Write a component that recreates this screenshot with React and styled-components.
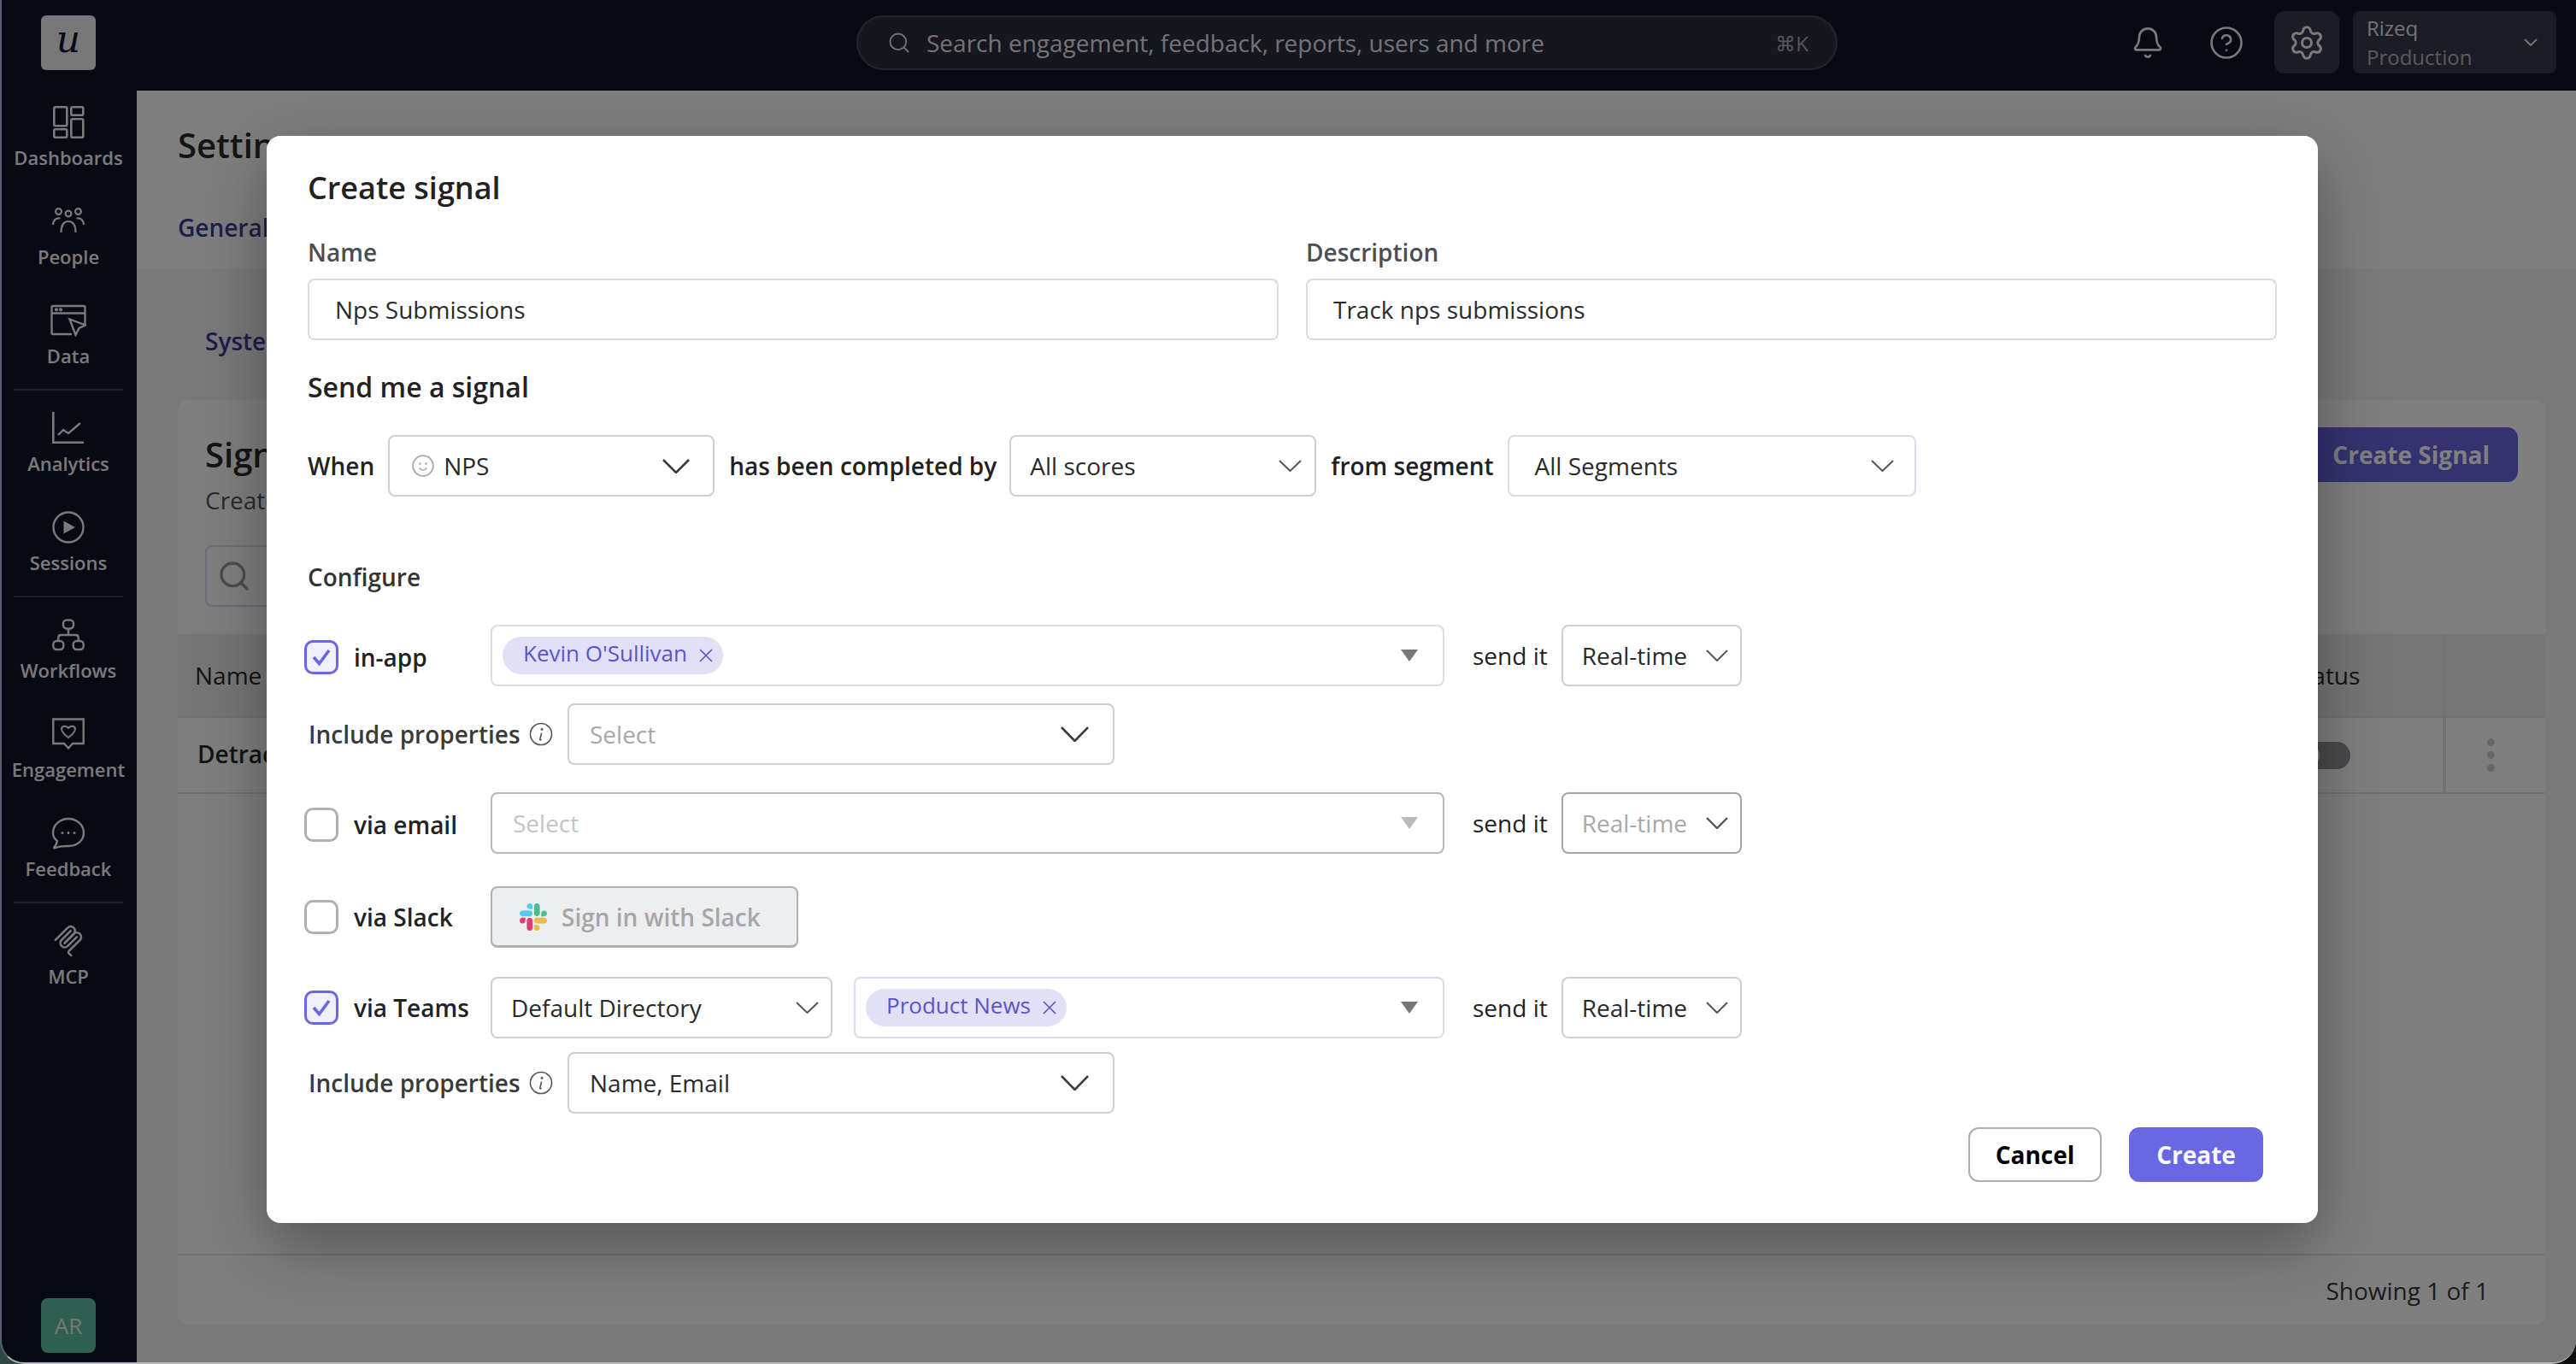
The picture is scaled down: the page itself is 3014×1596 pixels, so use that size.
import React from "react";
import styled, { createGlobalStyle } from "styled-components";
import { Bell, CircleHelp, Settings, Search } from "lucide-react";

const GlobalStyle = createGlobalStyle`
	html, body {
		margin: 0;
		padding: 0;
		overflow: hidden;
		background: linear-gradient(90deg, #2c4a42, #0d0d0d);
	}
	* {
		box-sizing: border-box;
	}
	body {
		font-family: "Open Sans", "Noto Sans", sans-serif;
		font-size: 28px;
		color: #222;
	}
`;

const toneColors = {
	grey: "#cfcfd2",
	blue: "#d8dbea",
	strong: "#b8b8bb",
	focus: "#a4a4ac",
};

const Shell = styled.div`
	position: relative;
	display: flex;
	width: 3014px;
	height: 1596px;
	overflow: hidden;
	background: #0e1228;
	border-left: 2px solid #5c5c72;
	border-bottom: 2px solid #b8b8b8;
	border-radius: 0 0 28px 28px;
`;

const Sidebar = styled.nav`
	flex: 0 0 158px;
	display: flex;
	flex-direction: column;
	align-items: center;
	padding-top: 18px;
	padding-bottom: 11px;
`;

const Logo = styled.div`
	width: 64px;
	height: 64px;
	margin-left: -2px;
	margin-bottom: 22px;
	flex: none;
	display: flex;
	align-items: center;
	justify-content: center;
	background: #f0f0f0;
	border-radius: 6px;
	color: #0e1228;
	font-family: "DejaVu Serif", "Liberation Serif", serif;
	font-style: italic;
	font-weight: 400;
	font-size: 44px;
	line-height: 1;
	padding-bottom: 8px;
`;

const NavItem = styled.a`
	width: 156px;
	margin-left: -2px;
	height: 116px;
	flex: none;
	display: flex;
	flex-direction: column;
	align-items: center;
	padding-top: 20px;
	color: #f4f4f4;
	font-size: 22px;
	font-weight: 600;

	svg {
		display: block;
		height: 38px;
		width: 42px;
		flex: none;
	}
`;

const NavLabel = styled.span`
	margin-top: 5px;
	line-height: 34px;
`;

const NavDivider = styled.div`
	flex: none;
	width: 128px;
	margin-left: -2px;
	height: 2px;
	margin-top: 3px;
	margin-bottom: 5px;
	background: #363848;
`;

const Avatar = styled.div`
	margin-top: auto;
	margin-left: -2px;
	width: 64px;
	height: 64px;
	display: flex;
	align-items: center;
	justify-content: center;
	background: #5ebea0;
	border-radius: 8px;
	color: #eee;
	font-size: 26px;
`;

const Column = styled.div`
	flex: 1;
	min-width: 0;
	display: flex;
	flex-direction: column;
`;

const Topbar = styled.header`
	flex: 0 0 106px;
	display: flex;
	align-items: flex-start;
	padding: 13px 23px 0 842px;
`;

const SearchBar = styled.div`
	width: 1148px;
	height: 64px;
	margin-top: 5px;
	display: flex;
	align-items: center;
	padding: 0 32px 0 34px;
	background: #2a2c3c;
	border: 2px solid #444659;
	border-radius: 32px;
	color: #e6e6ec;
`;

const SearchText = styled.span`
	margin-left: 18px;
	font-size: 28px;
	flex: 1;
`;

const ShortcutHint = styled.span`
	font-size: 24px;
	color: #aaaab0;
`;

const TopActions = styled.div`
	margin-left: auto;
	display: flex;
	align-items: center;
	height: 73px;
	color: #f4f4f4;
`;

const IconSlot = styled.div`
	width: ${props => props.$w}px;
	display: flex;
	justify-content: center;
`;

const GearButton = styled.div`
	width: 76px;
	height: 73px;
	margin-left: 10px;
	display: flex;
	align-items: center;
	justify-content: center;
	background: #36384a;
	border-radius: 12px;
`;

const WorkspaceSwitch = styled.div`
	width: 238px;
	height: 73px;
	margin-left: 16px;
	display: flex;
	align-items: center;
	justify-content: space-between;
	padding: 0 22px 0 16px;
	background: #36384a;
	border-radius: 8px;
`;

const WorkspaceName = styled.div`
	font-size: 24px;
	line-height: 34px;
	color: #e6e6ec;
`;

const WorkspaceEnv = styled(WorkspaceName)`
	color: #b4b4ba;
`;

const Main = styled.main`
	flex: 1;
	background: #f4f4f4;
`;

const PageHead = styled.div`
	height: 208px;
	padding: 38px 48px 0;
	background: #fff;
`;

const PageTitle = styled.h1`
	margin: 0;
	font-size: 40px;
	font-weight: 600;
	line-height: 52px;
	color: #2a2a2a;
`;

const TopTab = styled.div`
	margin-top: 51px;
	font-size: 28px;
	font-weight: 600;
	line-height: 38px;
	color: #3a3e96;
`;

const SubTab = styled(TopTab)`
	margin: 0;
	padding: 66px 0 50px 80px;
	height: 154px;
`;

const Card = styled.section`
	margin: 0 36px 0 48px;
	height: 1082px;
	display: flex;
	flex-direction: column;
	background: #fff;
	border-radius: 12px;
`;

const CardHead = styled.div`
	height: 274px;
	padding: 32px;
	position: relative;
	display: flex;
	justify-content: space-between;
`;

const CardTitle = styled.h2`
	margin: 5px 0 0;
	font-size: 40px;
	font-weight: 600;
	line-height: 54px;
	color: #2a2a2a;
`;

const CardText = styled.p`
	margin: 7px 0 0;
	line-height: 38px;
	color: #555;
`;

const TableSearch = styled.div`
	width: 640px;
	height: 72px;
	margin-top: 34px;
	display: flex;
	align-items: center;
	padding-left: 12px;
	border: 2px solid #d8dbea;
	border-radius: 8px;
	color: #999;
`;

const PrimaryButton = styled.button`
	width: 300px;
	height: 64px;
	border: 0;
	border-radius: 12px;
	background: #6967e1;
	color: #fff;
	font: 700 28px "Open Sans", sans-serif;
	text-align: right;
	padding: 0 33px 0 0;
`;

const TableRow = styled.div`
	display: flex;
	height: ${props => props.$h}px;
	flex: none;
	align-items: stretch;
	background: ${props => (props.$head ? "#ececec" : "#fff")};
	border-bottom: 2px solid #e2e2e2;
`;

const NameCell = styled.div`
	flex: 1;
	display: flex;
	align-items: center;
	padding-left: ${props => props.$pl}px;
	padding-bottom: ${props => props.$pb || 0}px;
	font-weight: ${props => props.$weight};
	color: #282828;
`;

const StatusCell = styled.div`
	width: 186px;
	display: flex;
	align-items: center;
	padding-left: ${props => props.$pl}px;
	font-weight: 500;
	color: #282828;
`;

const ActionCell = styled.div`
	width: 120px;
	display: flex;
	align-items: center;
	justify-content: center;
	border-left: 4px solid ${props => (props.$head ? "#e6e6e6" : "#e2e2e2")};
`;

const Toggle = styled.div`
	width: 66px;
	height: 32px;
	padding: 2px;
	border-radius: 16px;
	background: #949498;
`;

const ToggleKnob = styled.div`
	width: 28px;
	height: 28px;
	border-radius: 50%;
	background: #f4f4f4;
`;

const Kebab = styled.div`
	display: flex;
	flex-direction: column;
	gap: 6px;
	margin-left: -12px;
`;

const KebabDot = styled.span`
	width: 9px;
	height: 9px;
	border-radius: 50%;
	background: #cdcdcd;
`;

const TableBody = styled.div`
	flex: 1;
`;

const TableFooter = styled.div`
	height: 83px;
	display: flex;
	align-items: center;
	justify-content: flex-end;
	padding: 0 66px 0 0;
	border-top: 2px solid #e2e2e2;
	color: #383838;
`;

const Overlay = styled.div`
	position: absolute;
	inset: 0;
	padding: 159px 0 0 310px;
	background: rgba(0, 0, 0, 0.5);
`;

const Modal = styled.div`
	width: 2400px;
	height: 1272px;
	padding: 37px 48px 48px;
	background: #fff;
	border-radius: 16px;
	box-shadow: 0 26px 80px rgba(0, 0, 0, 0.34);
	color: #1f1f1f;
`;

const ModalTitle = styled.h2`
	margin: 0;
	font-size: 36px;
	font-weight: 600;
	line-height: 48px;
	color: #222;
`;

const FieldGrid = styled.div`
	margin-top: 32px;
	display: grid;
	grid-template-columns: 1fr 1fr;
	column-gap: 32px;
`;

const FieldLabel = styled.label`
	display: block;
	margin-bottom: 12px;
	line-height: 38px;
	font-weight: 600;
	color: #4a4e56;
`;

const TextInput = styled.div`
	height: 72px;
	display: flex;
	align-items: center;
	padding: 0 30px;
	border: 2px solid #d8dbea;
	border-radius: 8px;
	color: #2a2a2a;
`;

const SectionTitle = styled.h3`
	margin: 33px 0 0;
	font-size: 32px;
	font-weight: 600;
	line-height: 44px;
	color: #222;
`;

const ConfigureTitle = styled.h3`
	margin: 75px 0 0;
	font-size: 28px;
	font-weight: 600;
	line-height: 38px;
	color: #333;
`;

const Row = styled.div`
	display: flex;
	align-items: center;
	margin-top: ${props => props.$mt}px;
`;

const Word = styled.span`
	flex: none;
	white-space: nowrap;
	font-weight: ${props => props.$weight || 600};
	margin: 0 ${props => props.$mr || 0}px 0 ${props => props.$ml || 0}px;
	color: #222;
`;

const ChannelLabel = styled.div`
	flex: 0 0 214px;
	display: flex;
	align-items: center;
	padding-top: ${props => props.$nudge || 0}px;
	font-weight: 600;
	color: #222;
`;

const Check = styled.span`
	flex: none;
	width: 40px;
	height: 40px;
	margin: 0 18px 0 -4px;
	display: flex;
	align-items: center;
	justify-content: center;
	border-radius: 10px;
	border: 3px solid ${props => (props.$on ? "#6967e1" : "#b0b0b3")};
	background: ${props => (props.$on ? "#f0effc" : "#fff")};
`;

const PropsLabel = styled.div`
	flex: 0 0 304px;
	display: flex;
	align-items: center;
	gap: 10px;
	padding-left: 1px;
	font-weight: 600;
	color: #3a3a3a;
`;

const SelectBox = styled.div`
	flex: none;
	width: ${props => props.$w}px;
	height: 72px;
	display: flex;
	align-items: center;
	justify-content: space-between;
	margin-left: ${props => props.$ml || 0}px;
	padding: 0 ${props => props.$pr}px 0 ${props => props.$pl}px;
	border: 2px solid ${props => toneColors[props.$tone || "grey"]};
	border-radius: 8px;
	background: #fff;
`;

const SelectValue = styled.span`
	display: flex;
	align-items: center;
	gap: 11px;
	color: ${props => props.$muted || "#2a2a2a"};
`;

const Chip = styled.span`
	height: 44px;
	display: inline-flex;
	align-items: center;
	gap: 14px;
	padding: 0 12px 0 24px;
	border-radius: 22px;
	background: #e2e0f7;
	color: #5955c8;
	font-size: 26px;
`;

const ChipText = styled.span`
	line-height: 1;
	padding-bottom: 6px;
`;

const SlackButton = styled.div`
	width: 360px;
	height: 72px;
	display: flex;
	align-items: center;
	gap: 17px;
	padding-left: 32px;
	border: 2px solid #b0b0b2;
	border-bottom-width: 3px;
	border-radius: 8px;
	background: #edeef0;
	color: #a6a6a8;
	font-weight: 600;
`;

const SendText = styled(Word)`
	margin: 0 16px 0 33px;
	font-weight: 400;
`;

const ModalActions = styled.div`
	display: flex;
	justify-content: flex-end;
	gap: 32px;
	margin-top: 16px;
	padding-right: 16px;
`;

const CancelButton = styled.button`
	width: 156px;
	height: 64px;
	border: 2px solid #adadaf;
	border-radius: 12px;
	background: #fff;
	color: #000;
	font: 700 28px "Open Sans", sans-serif;
`;

const CreateButton = styled.button`
	width: 157px;
	height: 64px;
	border: 0;
	border-radius: 12px;
	background: #6967e1;
	color: #f8f8ff;
	font: 700 28px "Open Sans", sans-serif;
`;

const Chevron = ({ w, h, sw = 2, color = "#555" }) => (
	<svg width={w} height={h} viewBox={`0 0 ${w} ${h}`} fill="none" style={{ flex: "none" }}>
		<polyline
			points={`1,1 ${w / 2},${h - 1} ${w - 1},1`}
			stroke={color}
			strokeWidth={sw}
		/>
	</svg>
);

const Caret = ({ color = "#777" }) => (
	<svg width="20" height="14" viewBox="0 0 20 14" style={{ flex: "none" }}>
		<polygon points="0,0 20,0 10,14" fill={color} />
	</svg>
);

const CheckMark = () => (
	<svg width="24" height="20" viewBox="0 0 24 20" fill="none">
		<polyline points="3,10 9.5,17.5 21,2" stroke="#6967e1" strokeWidth="3.6" />
	</svg>
);

const CloseMark = () => (
	<svg width="16" height="16" viewBox="0 0 16 16" fill="none" style={{ flex: "none" }}>
		<path d="M1 1 L15 15 M15 1 L1 15" stroke="#5955c8" strokeWidth="1.6" />
	</svg>
);

const InfoIcon = () => (
	<svg width="28" height="28" viewBox="0 0 28 28" fill="none" style={{ flex: "none" }}>
		<circle cx="14" cy="14" r="12.5" stroke="#555" strokeWidth="1.6" />
		<circle cx="15" cy="8.5" r="1.4" fill="#555" />
		<path d="M14.6 12.5 L12.8 20 Q12.8 21 14.6 20.4" stroke="#555" strokeWidth="1.6" />
	</svg>
);

const Smiley = () => (
	<svg width="26" height="26" viewBox="0 0 26 26" fill="none" style={{ flex: "none" }}>
		<circle cx="13" cy="13" r="11.8" stroke="#a8a8a8" strokeWidth="1.8" />
		<circle cx="9.4" cy="10.5" r="1.2" fill="#a8a8a8" />
		<circle cx="16.6" cy="10.5" r="1.2" fill="#a8a8a8" />
		<path d="M8.5 15.5 Q13 20.5 17.5 15.5" stroke="#a8a8a8" strokeWidth="1.6" />
	</svg>
);

const SlackLogo = () => (
	<svg width="32" height="32" viewBox="0 0 122.8 122.8" style={{ flex: "none", opacity: 0.85 }}>
		<path fill="#e01e5a" d="M25.8 77.6c0 7.1-5.8 12.9-12.9 12.9S0 84.7 0 77.6s5.8-12.9 12.9-12.9h12.9v12.9zM32.3 77.6c0-7.1 5.8-12.9 12.9-12.9s12.9 5.8 12.9 12.9v32.3c0 7.1-5.8 12.9-12.9 12.9s-12.9-5.8-12.9-12.9V77.6z" />
		<path fill="#36c5f0" d="M45.2 25.8c-7.1 0-12.9-5.8-12.9-12.9S38.1 0 45.2 0s12.9 5.8 12.9 12.9v12.9H45.2zM45.2 32.3c7.1 0 12.9 5.8 12.9 12.9s-5.8 12.9-12.9 12.9H12.9C5.8 58.1 0 52.3 0 45.2s5.8-12.9 12.9-12.9h32.3z" />
		<path fill="#2eb67d" d="M97 45.2c0-7.1 5.8-12.9 12.9-12.9s12.9 5.8 12.9 12.9-5.8 12.9-12.9 12.9H97V45.2zM90.5 45.2c0 7.1-5.8 12.9-12.9 12.9s-12.9-5.8-12.9-12.9V12.9C64.7 5.8 70.5 0 77.6 0s12.9 5.8 12.9 12.9v32.3z" />
		<path fill="#ecb22e" d="M77.6 97c7.1 0 12.9 5.8 12.9 12.9s-5.8 12.9-12.9 12.9-12.9-5.8-12.9-12.9V97h12.9zM77.6 90.5c-7.1 0-12.9-5.8-12.9-12.9s5.8-12.9 12.9-12.9h32.3c7.1 0 12.9 5.8 12.9 12.9s-5.8 12.9-12.9 12.9H77.6z" />
	</svg>
);

const DashboardsIcon = () => (
	<svg viewBox="0 0 42 38" fill="none" stroke="currentColor" strokeWidth="2.6">
		<rect x="4.3" y="1.3" width="15" height="22" rx="1.5" />
		<rect x="4.3" y="27.3" width="15" height="9.4" rx="1.5" />
		<rect x="24.3" y="1.3" width="14" height="9.4" rx="1.5" />
		<rect x="24.3" y="15.3" width="14" height="21.4" rx="1.5" />
	</svg>
);

const PeopleIcon = () => (
	<svg viewBox="0 0 42 38" fill="none" stroke="currentColor" strokeWidth="2.2">
		<circle cx="21" cy="10" r="3.4" />
		<circle cx="9.5" cy="7.5" r="3.4" />
		<circle cx="32.5" cy="7.5" r="3.4" />
		<path d="M12.5 32 C12.5 24 15.5 19 21 19 C26.5 19 29.5 24 29.5 32" />
		<path d="M3 23 C3.5 17 7 14.5 11.5 15.5" />
		<path d="M39 23 C38.5 17 35 14.5 30.5 15.5" />
	</svg>
);

const DataIcon = () => (
	<svg viewBox="0 0 42 38" fill="none" stroke="currentColor" strokeWidth="2.4">
		<path d="M25 35 H3 Q1.5 35 1.5 33.5 V3.5 Q1.5 2 3 2 H39 Q40.5 2 40.5 3.5 V24" />
		<path d="M1.5 10.5 H40.5" />
		<circle cx="7" cy="6.3" r="0.9" fill="currentColor" />
		<circle cx="12" cy="6.3" r="0.9" fill="currentColor" />
		<path d="M22.5 17.5 L41 24.5 L33.5 28 L29.5 36 Z" fill="#0e1228" />
	</svg>
);

const AnalyticsIcon = () => (
	<svg viewBox="0 0 42 38" fill="none" stroke="currentColor" strokeWidth="2.6">
		<path d="M3.3 0 V35.7 H39" />
		<path d="M9 27 L15 21 L21 25 L35 13" strokeWidth="2.4" />
	</svg>
);

const SessionsIcon = () => (
	<svg viewBox="0 0 42 38" fill="none" stroke="currentColor" strokeWidth="2.4">
		<circle cx="21" cy="19" r="17.5" />
		<path d="M15.5 11.5 L29 19 L15.5 26.5 Z" fill="currentColor" stroke="none" />
	</svg>
);

const WorkflowsIcon = () => (
	<svg viewBox="0 0 42 38" fill="none" stroke="currentColor" strokeWidth="2.4">
		<rect x="15" y="1.5" width="12" height="10" rx="4" />
		<rect x="3.3" y="26" width="12" height="10" rx="4" />
		<rect x="26.7" y="26" width="12" height="10" rx="4" />
		<path d="M21 11.5 V19 M9.3 26 V22 Q9.3 19 12.3 19 H29.7 Q32.7 19 32.7 22 V26" />
	</svg>
);

const EngagementIcon = () => (
	<svg viewBox="0 0 42 38" fill="none" stroke="currentColor" strokeWidth="2.4">
		<path d="M3.3 1.5 H38.7 V30 H26 L21 35.5 L16 30 H3.3 Z" />
		<path d="M21 23 C15 18.5 13 16 13 13 C13 9.8 17.5 8 21 11.8 C24.5 8 29 9.8 29 13 C29 16 27 18.5 21 23 Z" strokeWidth="2" />
	</svg>
);

const FeedbackIcon = () => (
	<svg viewBox="0 0 42 38" fill="none" stroke="currentColor" strokeWidth="2.4">
		<path d="M8 28 C4.5 25.5 3 22 3 18.5 C3 9.5 11 2 21 2 C31 2 39 9.5 39 18.5 C39 27.5 31 34 21 34 C16 34 12 33.5 3.5 36.5 C6.5 33.5 7.5 31 8 28 Z" />
		<circle cx="14" cy="18.5" r="1.6" fill="currentColor" stroke="none" />
		<circle cx="21" cy="18.5" r="1.6" fill="currentColor" stroke="none" />
		<circle cx="28" cy="18.5" r="1.6" fill="currentColor" stroke="none" />
	</svg>
);

const McpIcon = () => (
	<svg viewBox="0 0 180 180" fill="none" stroke="currentColor" strokeWidth="12" strokeLinecap="round">
		<path d="M18 84.8528L85.8822 16.9706C95.2548 7.59798 110.451 7.59798 119.823 16.9706C129.196 26.3431 129.196 41.5391 119.823 50.9117L68.5581 102.177" />
		<path d="M69.2652 101.47L119.823 50.9117C129.196 41.5391 144.392 41.5391 153.765 50.9117L154.118 51.2652C163.491 60.6378 163.491 75.8338 154.118 85.2063L92.7248 146.6C89.6006 149.724 89.6006 154.789 92.7248 157.913L105.331 170.52" />
		<path d="M102.853 33.9411L52.6482 84.1457C43.2756 93.5183 43.2756 108.714 52.6482 118.087C62.0208 127.459 77.2167 127.459 86.5893 118.087L136.794 67.8822" />
	</svg>
);

const navGroups = [
	[
		["Dashboards", DashboardsIcon],
		["People", PeopleIcon],
		["Data", DataIcon],
	],
	[
		["Analytics", AnalyticsIcon],
		["Sessions", SessionsIcon],
	],
	[
		["Workflows", WorkflowsIcon],
		["Engagement", EngagementIcon],
		["Feedback", FeedbackIcon],
	],
	[["MCP", McpIcon]],
];

const Nav = () => (
	<Sidebar>
		<Logo>u</Logo>
		{navGroups.map((group, i) => (
			<React.Fragment key={i}>
				{i > 0 && <NavDivider />}
				{group.map(([label, Icon]) => (
					<NavItem key={label}>
						<Icon />
						<NavLabel>{label}</NavLabel>
					</NavItem>
				))}
			</React.Fragment>
		))}
		<Avatar>AR</Avatar>
	</Sidebar>
);

const Top = () => (
	<Topbar>
		<SearchBar>
			<Search size={28} strokeWidth={1.6} color="#e6e6ec" />
			<SearchText>Search engagement, feedback, reports, users and more</SearchText>
			<ShortcutHint>⌘K</ShortcutHint>
		</SearchBar>
		<TopActions>
			<IconSlot $w={92}>
				<Bell size={40} strokeWidth={1.6} />
			</IconSlot>
			<IconSlot $w={92}>
				<CircleHelp size={42} strokeWidth={1.5} />
			</IconSlot>
			<GearButton>
				<Settings size={44} strokeWidth={1.7} />
			</GearButton>
			<WorkspaceSwitch>
				<div>
					<WorkspaceName>Rizeq</WorkspaceName>
					<WorkspaceEnv>Production</WorkspaceEnv>
				</div>
				<Chevron w={16} h={9} sw={2} color="#e6e6ec" />
			</WorkspaceSwitch>
		</TopActions>
	</Topbar>
);

const Background = () => (
	<Main>
		<PageHead>
			<PageTitle>Settings</PageTitle>
			<TopTab>General</TopTab>
		</PageHead>
		<SubTab>System</SubTab>
		<Card>
			<CardHead>
				<div>
					<CardTitle>Signals</CardTitle>
					<CardText>Create signals</CardText>
					<TableSearch>
						<Search size={40} strokeWidth={2} />
					</TableSearch>
				</div>
				<PrimaryButton>Create Signal</PrimaryButton>
			</CardHead>
			<TableRow $h={98} $head>
				<NameCell $pl={20} $weight={500}>Name</NameCell>
				<StatusCell $pl={8}>Status</StatusCell>
				<ActionCell $head />
			</TableRow>
			<TableRow $h={89}>
				<NameCell $pl={23} $pb={4} $weight={600}>Detractors</NameCell>
				<StatusCell $pl={12}>
					<Toggle>
						<ToggleKnob />
					</Toggle>
				</StatusCell>
				<ActionCell>
					<Kebab>
						<KebabDot />
						<KebabDot />
						<KebabDot />
					</Kebab>
				</ActionCell>
			</TableRow>
			<TableBody />
			<TableFooter>Showing 1 of 1</TableFooter>
		</Card>
	</Main>
);

const Recipient = ({ label }) => (
	<Chip>
		<ChipText>{label}</ChipText>
		<CloseMark />
	</Chip>
);

const SendIt = ({ tone = "grey", muted }) => (
	<>
		<SendText>send it</SendText>
		<SelectBox $w={211} $pl={22} $pr={14} $tone={tone}>
			<SelectValue $muted={muted}>Real-time</SelectValue>
			<Chevron w={26} h={14} sw={tone === "focus" ? 2.4 : 2} />
		</SelectBox>
	</>
);

const IncludeProperties = ({ mt, value, muted }) => (
	<Row $mt={mt}>
		<PropsLabel>
			Include properties
			<InfoIcon />
		</PropsLabel>
		<SelectBox $w={640} $pl={24} $pr={28}>
			<SelectValue $muted={muted}>{value}</SelectValue>
			<Chevron w={33} h={18} sw={2.6} color="#3c3c3c" />
		</SelectBox>
	</Row>
);

const CreateSignalModal = () => (
	<Overlay>
		<Modal>
			<ModalTitle>Create signal</ModalTitle>
			<FieldGrid>
				<div>
					<FieldLabel>Name</FieldLabel>
					<TextInput>Nps Submissions</TextInput>
				</div>
				<div>
					<FieldLabel>Description</FieldLabel>
					<TextInput>Track nps submissions</TextInput>
				</div>
			</FieldGrid>
			<SectionTitle>Send me a signal</SectionTitle>
			<Row $mt={34}>
				<Word $mr={16}>When</Word>
				<SelectBox $w={382} $pl={26} $pr={27}>
					<SelectValue>
						<Smiley />
						NPS
					</SelectValue>
					<Chevron w={32} h={17} sw={2.6} color="#3c3c3c" />
				</SelectBox>
				<Word $ml={17} $mr={15}>has been completed by</Word>
				<SelectBox $w={359} $pl={22} $pr={15}>
					<SelectValue>All scores</SelectValue>
					<Chevron w={27} h={14} />
				</SelectBox>
				<Word $ml={17} $mr={16}>from segment</Word>
				<SelectBox $w={478} $pl={30} $pr={24} $tone="blue">
					<SelectValue>All Segments</SelectValue>
					<Chevron w={27} h={14} />
				</SelectBox>
			</Row>
			<ConfigureTitle>Configure</ConfigureTitle>
			<Row $mt={37}>
				<ChannelLabel $nudge={4}>
					<Check $on>
						<CheckMark />
					</Check>
					in-app
				</ChannelLabel>
				<SelectBox $w={1116} $pl={12} $pr={29} $tone="blue">
					<Recipient label="Kevin O'Sullivan" />
					<Caret />
				</SelectBox>
				<SendIt />
			</Row>
			<IncludeProperties mt={20} value="Select" muted="#a8a8a8" />
			<Row $mt={32}>
				<ChannelLabel $nudge={4}>
					<Check />
					via email
				</ChannelLabel>
				<SelectBox $w={1116} $pl={24} $pr={29} $tone="strong">
					<SelectValue $muted="#c4c4c4">Select</SelectValue>
					<Caret color="#bbb" />
				</SelectBox>
				<SendIt tone="focus" muted="#a8a8a8" />
			</Row>
			<Row $mt={38}>
				<ChannelLabel>
					<Check />
					via Slack
				</ChannelLabel>
				<SlackButton>
					<SlackLogo />
					Sign in with Slack
				</SlackButton>
			</Row>
			<Row $mt={34}>
				<ChannelLabel>
					<Check $on>
						<CheckMark />
					</Check>
					via Teams
				</ChannelLabel>
				<SelectBox $w={400} $pl={22} $pr={14}>
					<SelectValue>Default Directory</SelectValue>
					<Chevron w={27} h={14} />
				</SelectBox>
				<SelectBox $w={691} $ml={25} $pl={12} $pr={29} $tone="blue">
					<Recipient label="Product News" />
					<Caret />
				</SelectBox>
				<SendIt />
			</Row>
			<IncludeProperties mt={16} value="Name, Email" />
			<ModalActions>
				<CancelButton>Cancel</CancelButton>
				<CreateButton>Create</CreateButton>
			</ModalActions>
		</Modal>
	</Overlay>
);

function App() {
	return (
		<>
			<GlobalStyle />
			<Shell>
				<Nav />
				<Column>
					<Top />
					<Background />
				</Column>
				<CreateSignalModal />
			</Shell>
		</>
	);
}

export default App;
